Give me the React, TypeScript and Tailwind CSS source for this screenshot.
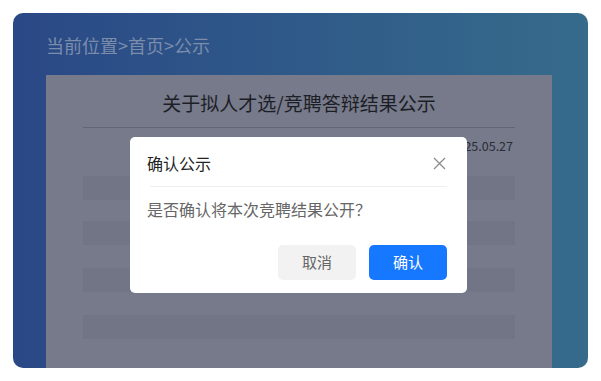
const font = { fontFamily: '"Noto Sans CJK SC", "Noto Sans", sans-serif' };

export default function App() {
  return (
    <div className="w-[601px] h-[381px] bg-white p-[13px]" style={font}>
      <div className="w-[575px] h-[355px] rounded-[10px] bg-gradient-to-r from-[#2a4886] to-[#366b8b] pl-[33px] pt-[19px] flex flex-col">
        <div className="text-[18px] leading-[26px] text-[#7c8cab]">当前位置&gt;首页&gt;公示</div>
        <div className="relative mt-[17px] w-[506px] flex-1 bg-[#777a8a] px-[37px] pt-[14px]">
          <h1 className="text-center text-[19px] leading-[28px] text-[#1d1f27]">关于拟人才选/竞聘答辩结果公示</h1>
          <div className="mt-[10px] h-px bg-[#62657a]" />
          <div className="mt-[9px] text-right text-[12.5px] leading-[18px] text-[#2a2c36] pr-[2px]">2025.05.27</div>
          <div className="mt-[21px] flex flex-col">
            <div className="h-[24px] bg-[#727585]" />
            <div className="mt-[21px] h-[24px] bg-[#727585]" />
            <div className="mt-[23px] h-[24px] bg-[#727585]" />
            <div className="mt-[23px] h-[24px] bg-[#727585]" />
          </div>

          <div className="absolute left-[84px] top-[62px] w-[337px] rounded-[5px] bg-white pt-[14px] pb-[13px]">
            <div className="flex items-center justify-between pl-[17px] pr-[21px]">
              <span className="text-[16px] leading-[24px] text-[#222]">确认公示</span>
              <svg width="13" height="13" viewBox="0 0 13 13" className="text-[#8c8c8c]">
                <path d="M1 1L12 12M12 1L1 12" stroke="currentColor" strokeWidth="1.3" />
              </svg>
            </div>
            <div className="mx-[20px] mt-[11px] h-px bg-[#eeeeee]" />
            <p className="mt-[10px] pl-[17px] text-[16px] leading-[24px] text-[#666]">是否确认将本次竞聘结果公开？</p>
            <div className="mt-[24px] flex justify-end gap-[13px] pr-[20px]">
              <button className="h-[35px] w-[78px] rounded-[5px] bg-[#f2f2f2] text-[15px] text-[#666]">取消</button>
              <button className="h-[35px] w-[78px] rounded-[5px] bg-[#1677ff] text-[15px] text-white">确认</button>
            </div>
          </div>
        </div>
      </div>
    </div>
  );
}
